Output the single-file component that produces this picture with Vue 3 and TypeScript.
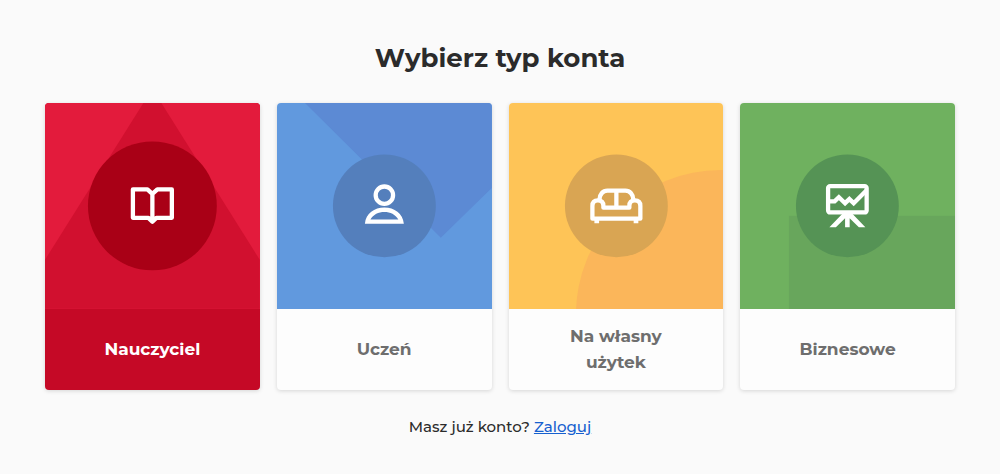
<script setup lang="ts">
import { ref } from 'vue'

type Kind = 'teacher' | 'student' | 'personal' | 'business'

interface AccountType {
  id: Kind
  label: string
}

const accountTypes: AccountType[] = [
  { id: 'teacher', label: 'Nauczyciel' },
  { id: 'student', label: 'Uczeń' },
  { id: 'personal', label: 'Na własny użytek' },
  { id: 'business', label: 'Biznesowe' },
]

const active = ref<Kind>('teacher')
</script>

<template>
  <main class="page">
    <h1 class="title">Wybierz typ konta</h1>

    <div class="cards">
      <button
        v-for="type in accountTypes"
        :key="type.id"
        type="button"
        class="card"
        :class="[type.id, { active: active === type.id }]"
        :aria-pressed="active === type.id"
        @click="active = type.id"
      >
        <svg class="art" viewBox="0 0 215 206" preserveAspectRatio="xMidYMid slice" aria-hidden="true">
          <polygon v-if="type.id === 'teacher'" class="shape" points="98.5,0 116.5,0 215,157 215,206 0,206 0,157" />
          <polygon v-else-if="type.id === 'student'" class="shape" points="28,0 215,0 215,85 164,135" />
          <circle v-else-if="type.id === 'personal'" class="shape" cx="212" cy="212" r="145" />
          <rect v-else class="shape" x="49" y="113" width="170" height="100" />

          <circle class="disc" cx="107.5" cy="103" :r="active === type.id ? 64.5 : 51.5" />

          <g class="icon" transform="translate(107.5 102.5)">
            <path
              v-if="type.id === 'teacher'"
              d="M-19.5 -16H-5L0 -11.5L5 -16H19.5V12.5H4L0 16.3L-4 12.5H-19.5ZM0 -11.5V16"
            />
            <template v-else-if="type.id === 'student'">
              <circle cx="0" cy="-10.2" r="8.7" />
              <path
                class="solid"
                fill-rule="evenodd"
                d="M-19.5 18.5C-18.5 8 -10 2.2 0 2.2S18.5 8 19.5 18.5ZM-14 14.2H14C11 9 6 6.6 0 6.6S-11 9 -14 14.2Z"
              />
            </template>
            <template v-else-if="type.id === 'personal'">
              <path d="M-17 -5.5C-17 -11 -13.5 -14.7 -9 -14.7H9C13.5 -14.7 17 -11 17 -5.5M0 -14.7V2" />
              <path
                d="M-13 2.3H13V0.5C13 -3 15 -5 18.5 -5S24 -3 24 0.5V13.3H-24V0.5C-24 -3 -22 -5 -18.5 -5S-13 -3 -13 0.5Z"
              />
              <path class="solid" d="M-22 14H-17.3V18H-22ZM17.3 14H22V18H17.3Z" />
            </template>
            <template v-else>
              <rect x="-19.3" y="-19.3" width="38.6" height="26.4" rx="2" />
              <path class="line" d="M-19 -4H-12.8L-8.5 -8.2L-2.3 -2.2L2 -6.3L6.3 -2.2L19 -15" />
              <path class="solid" d="M-5 8.5H5L18 22H11.5L2.3 12.8V22H-2.3V12.8L-11.5 22H-18Z" />
            </template>
          </g>
        </svg>
        <span class="label">{{ type.label }}</span>
      </button>
    </div>

    <p class="login">Masz już konto? <a href="#login">Zaloguj</a></p>
  </main>
</template>

<style>
body {
  margin: 0;
  background: #fafafa;
}
</style>

<style scoped>
.page {
  padding: 40px 45px 36px;
  font-family: Montserrat, Inter, "Open Sans", sans-serif;
  color: #2b2b2b;
}

.title {
  margin: 0 0 27px;
  font-size: 26px;
  line-height: 36px;
  font-weight: 700;
  text-align: center;
}

.cards {
  display: grid;
  grid-template-columns: repeat(4, 1fr);
  gap: 17px;
}

.card {
  display: flex;
  flex-direction: column;
  padding: 0;
  border: 0;
  border-radius: 4px;
  overflow: hidden;
  background: #fdfdfd;
  color: #6e6e6e;
  font: inherit;
  font-size: 17px;
  line-height: 26px;
  font-weight: 700;
  cursor: pointer;
  box-shadow: 0 1px 4px rgba(0, 0, 0, 0.15);
}

.art {
  display: block;
  width: 100%;
  aspect-ratio: 215 / 206;
}

.label {
  display: flex;
  flex: 1;
  align-items: center;
  justify-content: center;
  align-self: stretch;
  min-height: 52px;
  padding: 14px 48px 15px;
}

.teacher .art { background: #e31b3c; }
.teacher .shape { fill: #d1102f; }
.teacher .disc { fill: #a90016; }

.student .art { background: #6199de; }
.student .shape { fill: #5c8ad4; }
.student .disc { fill: #547fbc; }

.personal .art { background: #fec457; }
.personal .shape { fill: #fbb65a; }
.personal .disc { fill: #d9a553; }

.business .art { background: #6fb15f; }
.business .shape { fill: #68a65c; }
.business .disc { fill: #559355; }

.card.active {
  background: #c50926;
  color: #fff;
}

.icon {
  fill: none;
  stroke: #fff;
  stroke-width: 4.3;
  stroke-linejoin: round;
}

.icon .line {
  stroke-linejoin: miter;
}

.icon .solid {
  fill: #fff;
  stroke: none;
}

.login {
  margin: 25px 0 0;
  font-size: 15px;
  line-height: 24px;
  font-weight: 500;
  text-align: center;
}

.login a {
  color: #1660cf;
  text-decoration: underline;
}
</style>
